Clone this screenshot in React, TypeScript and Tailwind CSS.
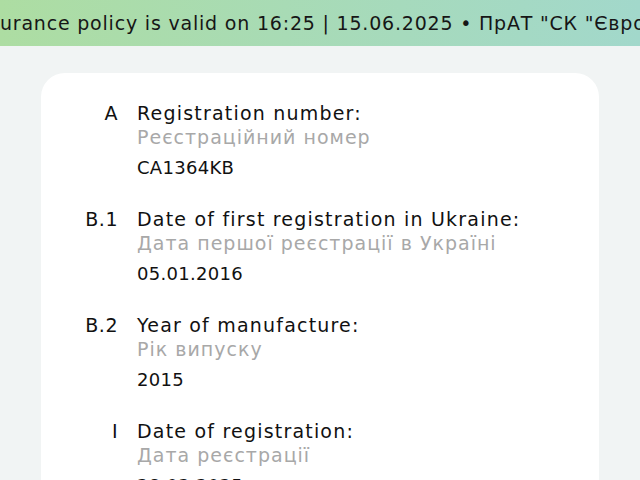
const rows = [
  { code: 'A', title: 'Registration number:', sub: 'Реєстраційний номер', value: 'CA1364KB' },
  { code: 'B.1', title: 'Date of first registration in Ukraine:', sub: 'Дата першої реєстрації в Україні', value: '05.01.2016' },
  { code: 'B.2', title: 'Year of manufacture:', sub: 'Рік випуску', value: '2015' },
  { code: 'I', title: 'Date of registration:', sub: 'Дата реєстрації', value: '28.03.2025' },
]

export default function App() {
  return (
    <div className="w-[640px] h-[480px] overflow-hidden bg-[#f1f4f4] text-[#111] font-['DejaVu_Sans',sans-serif]">
      <div className="h-[46px] flex items-center overflow-hidden bg-gradient-to-r from-[#addda2] to-[#a2d8cb]">
        <p className="whitespace-nowrap text-[19px] leading-6 tracking-[0.8px] text-[#161616] -translate-x-[30px]">
          Insurance policy is valid on 16:25 | 15.06.2025 • ПрАТ "СК "Європейське туристичне страхування"
        </p>
      </div>
      <div className="mx-[41px] mt-[27px] bg-white rounded-[24px] pt-[28px] pb-10 flex flex-col gap-[27px]">
        {rows.map((r) => (
          <div key={r.code} className="flex">
            <div className="w-[77px] text-right text-[19px] leading-6 tracking-[0.5px]">{r.code}</div>
            <div className="pl-[19px] flex flex-col">
              <p className="text-[19px] leading-6 tracking-[1.2px]">{r.title}</p>
              <p className="text-[19px] leading-6 tracking-[1px] text-[#a8a8a8]">{r.sub}</p>
              <p className="mt-[7px] text-[18px] leading-6 tracking-[0.3px]">{r.value}</p>
            </div>
          </div>
        ))}
      </div>
    </div>
  )
}
